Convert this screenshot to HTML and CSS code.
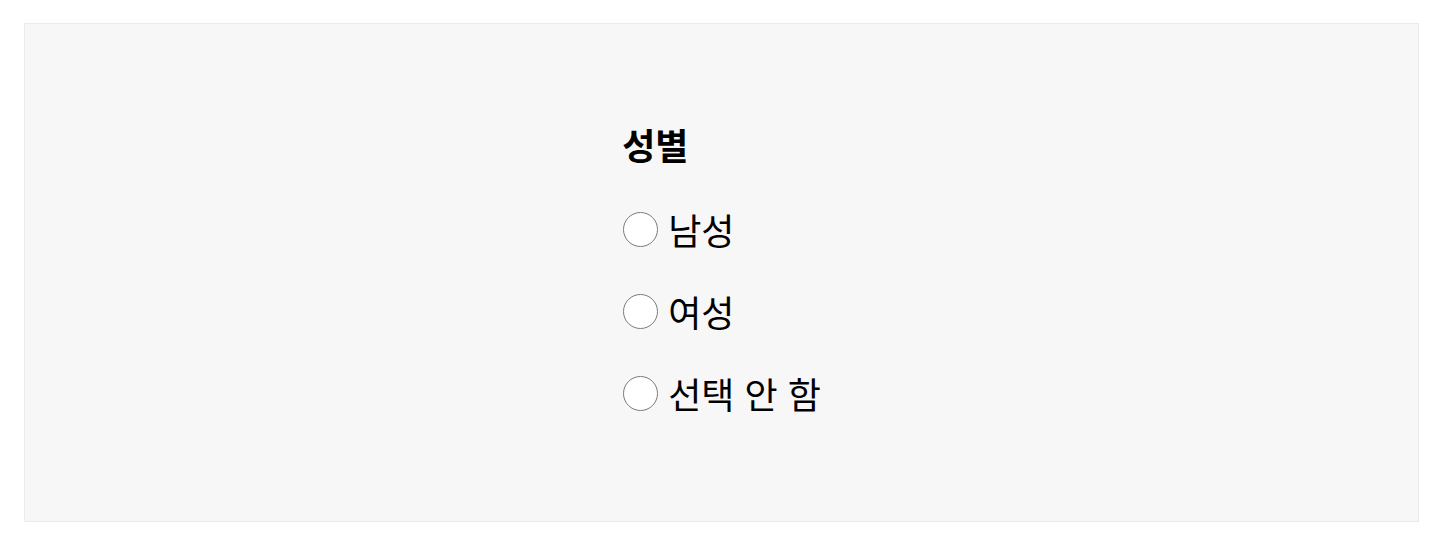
FILE: index.html
```html
<!DOCTYPE html>
<html lang="ko">
<head>
  <meta charset="UTF-8">
  <title>성별 선택</title>
  <link rel="stylesheet" href="styles.css">
</head>
<body>
  <div class="panel">
    <fieldset class="gender">
      <legend class="gender-title">성별</legend>
      <label class="option">
        <input type="radio" name="gender" value="male">
        <span>남성</span>
      </label>
      <label class="option">
        <input type="radio" name="gender" value="female">
        <span>여성</span>
      </label>
      <label class="option">
        <input type="radio" name="gender" value="none">
        <span>선택 안 함</span>
      </label>
    </fieldset>
  </div>
</body>
</html>
```

FILE: styles.css
```css
body {
  margin: 0;
  padding: 23px 24px 24px 24px;
  background: #fff;
  font-family: "Noto Sans CJK KR", "Noto Sans", sans-serif;
  color: #000;
}

.panel {
  height: 489px;
  padding-bottom: 8px;
  background: #f7f7f7;
  border: 1px solid #ebebeb;
  display: flex;
  justify-content: center;
  align-items: center;
}

.gender {
  border: none;
  margin: 0;
  padding: 0;
  display: flex;
  flex-direction: column;
  gap: 28px;
  font-size: 36px;
  line-height: 54px;
}

.gender-title {
  float: left;
  padding: 0;
  margin-bottom: 3px;
  font-weight: bold;
}

.option {
  display: flex;
  align-items: center;
  gap: 10px;
  cursor: pointer;
}

.option input {
  appearance: none;
  margin: 0 0 0 1px;
  width: 35px;
  height: 35px;
  border: 1.5px solid #7a7a7a;
  border-radius: 50%;
  background: #fff;
}

.option input:checked {
  border: 10px solid #1a73e8;
}
```
